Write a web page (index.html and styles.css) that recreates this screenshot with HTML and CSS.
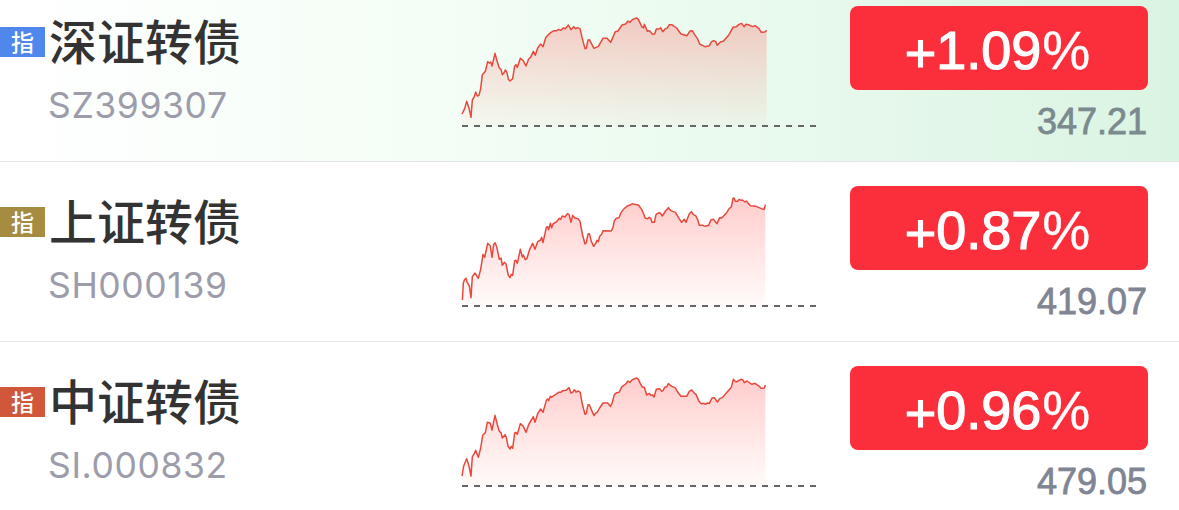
FILE: index.html
```
<!doctype html>
<html lang="zh-CN"><head>
	<title>自选</title>
	<meta charset="utf-8">
	<link rel="stylesheet" href="styles.css">
	<script src="charts.js" defer></script>
</head><body>
	<svg class="defs" width="0" height="0">
		<linearGradient id="fill" x1="0" y1="54" x2="0" y2="378" gradientUnits="userSpaceOnUse">
			<stop offset="0" stop-color="#ff3b3b" stop-opacity=".26"/>
			<stop offset="1" stop-color="#ff5b4b" stop-opacity=".03"/>
		</linearGradient>
	</svg>
	<div class="list">
		<div class="row active">
			<span class="tag blue">指</span>
			<div class="stock">
				<div class="name">深证转债</div>
				<div class="code">SZ399307</div>
			</div>
			<svg class="chart" viewBox="0 0 1098 420">
				<path class="area"/>
				<path class="line"/>
				<path class="base" d="M36 378H1098"/>
			</svg>
			<div class="quote">
				<div class="change"><span class="sign">+</span>1.09<span class="pct">%</span></div>
				<div class="price">347.21</div>
			</div>
		</div>
		<div class="row">
			<span class="tag gold">指</span>
			<div class="stock">
				<div class="name">上证转债</div>
				<div class="code">SH000139</div>
			</div>
			<svg class="chart" viewBox="0 0 1098 420">
				<path class="area"/>
				<path class="line"/>
				<path class="base" d="M36 378H1098"/>
			</svg>
			<div class="quote">
				<div class="change"><span class="sign">+</span>0.87<span class="pct">%</span></div>
				<div class="price">419.07</div>
			</div>
		</div>
		<div class="row">
			<span class="tag red">指</span>
			<div class="stock">
				<div class="name">中证转债</div>
				<div class="code">SI.000832</div>
			</div>
			<svg class="chart" viewBox="0 0 1098 420">
				<path class="area"/>
				<path class="line"/>
				<path class="base" d="M36 378H1098"/>
			</svg>
			<div class="quote">
				<div class="change"><span class="sign">+</span>0.96<span class="pct">%</span></div>
				<div class="price">479.05</div>
			</div>
		</div>
	</div>
</body></html>
```

FILE: charts.js
```
// x y pairs, one series per row
var series = [
	'36 342 44 326 50 304 58 328 63 352 67 300 73 290 77 276 82 288 87 286 92 266 97 224 106 214 113 185 118 189 122 186 126 198 135 160 142 186 148 204 153 208 157 224 161 220 166 210 171 218 175 238 180 243 188 236 194 198 198 194 202 202 211 175 219 181 228 198 236 177 242 172 250 154 256 166 263 144 272 132 279 140 287 113 295 104 302 98 312 92 320 92 326 88 332 91 340 84 346 86 355 75 363 89 371 80 377 86 382 83 390 86 397 116 405 146 409 145 414 120 418 119 424 130 432 145 445 139 459 115 471 115 482 127 496 95 504 93 516 75 527 72 534 63 540 67 547 59 560 54 565 58 571 71 577 82 581 83 583 73 588 84 592 94 598 92 608 103 614 102 619 87 629 86 632 83 638 95 646 86 651 85 658 74 665 74 680 84 693 102 711 107 720 93 727 92 734 104 742 115 749 132 757 136 765 140 778 137 784 126 791 122 797 125 802 136 812 125 820 124 837 104 849 82 859 80 867 73 875 70 882 80 888 73 895 74 908 80 915 77 927 86 934 97 944 96 950 91',
	'37 360 40 310 43 300 48 295 52 308 58 318 63 353 67 290 75 279 85 295 92 268 99 223 104 232 113 190 121 198 126 232 131 194 135 188 140 200 148 238 153 234 157 256 163 247 168 252 175 286 180 293 184 283 188 286 194 242 198 241 202 250 211 208 217 231 220 225 226 239 231 235 239 208 248 190 255 208 263 185 272 180 275 172 279 188 289 142 293 140 296 149 301 130 305 143 309 132 320 125 328 115 332 118 337 108 345 111 352 101 357 103 363 127 368 106 374 114 384 116 390 124 397 162 405 192 409 188 414 162 418 161 424 184 431 199 437 190 441 181 445 185 449 169 455 163 459 152 484 153 489 142 493 122 499 115 507 113 513 98 523 85 534 77 541 75 547 71 552 73 565 75 575 88 586 115 593 116 598 112 602 115 606 127 613 127 618 104 623 100 630 98 637 108 647 93 655 83 663 92 676 97 687 115 695 127 703 118 708 127 718 101 724 95 730 104 737 107 743 119 748 136 758 136 766 139 776 136 783 119 790 118 801 131 809 113 815 114 830 98 838 85 844 81 849 55 852 54 856 64 863 64 867 58 873 61 877 60 885 66 889 63 901 77 918 79 940 88 943 87 946 74',
	'36 348 41 318 50 296 57 318 63 348 67 290 73 281 77 271 85 292 92 264 98 226 106 218 112 187 121 190 126 210 135 166 142 194 148 214 153 218 157 234 165 224 169 233 174 258 180 267 184 259 188 265 194 219 198 217 202 223 211 191 220 199 228 217 237 192 250 170 255 187 263 161 272 147 279 157 289 121 293 117 296 122 301 109 304 112 316 104 326 97 332 97 338 92 348 91 357 83 363 99 368 97 373 89 378 96 386 93 391 98 396 129 405 163 409 160 414 134 418 134 424 149 432 167 437 159 441 158 449 144 459 129 473 129 481 139 486 130 493 104 500 98 507 97 516 80 527 72 534 63 540 67 547 59 560 54 565 58 571 71 577 81 583 82 590 105 598 100 602 106 608 105 612 111 619 88 629 86 635 94 639 92 645 81 650 81 655 71 665 79 675 83 685 99 693 109 710 109 718 94 725 90 733 100 738 103 747 124 754 131 762 130 766 133 771 129 778 130 786 114 793 113 802 126 810 115 818 112 831 97 844 82 850 58 858 66 873 58 879 60 883 68 891 63 906 73 915 70 928 79 933 85 943 84 946 75'
];

document.querySelectorAll('.chart').forEach(function(chart, i) {
	var points = series[i];
	chart.querySelector('.line').setAttribute('d', 'M' + points);
	chart.querySelector('.area').setAttribute('d', 'M' + points + 'V378H36Z');
});
```

FILE: styles.css
```
body {
	margin: 0;
	background: white;
	overflow: hidden;
	font-family: "Liberation Sans", "Noto Sans CJK SC", sans-serif;
}

.defs {
	display: block;
}

.list {
	margin-top: -18px;
}

.row {
	display: flex;
	align-items: flex-start;
	box-sizing: border-box;
	height: 180px;
	padding: 18px 31px 0 0;
	border-bottom: 1px solid #e4e4e6;
}

.active {
	background: linear-gradient(to right, #fff 0, #f4fef6 35%, #e8f9ed 68%, #daf4e2 100%);
}

.tag {
	width: 45px;
	height: 30px;
	margin: 27px 4px 0 0;
	color: white;
	font: 500 23px/28px "Noto Sans CJK SC", sans-serif;
	text-align: center;
}

.blue { background: #4f87ec; }
.gold { background: #a58c40; }
.red { background: #d0573a; }

.stock {
	width: 401px;
}

.name {
	height: 84px;
	color: #333;
	font: 500 48px/79px "Noto Sans CJK SC", sans-serif;
}

.code {
	margin-left: -1px;
	color: #9c9cab;
	font: 400 35.5px/43px Inter, sans-serif;
	letter-spacing: .6px;
}

.chart {
	width: 366px;
	height: 140px;
}

.area {
	fill: url(#fill);
}

.line {
	fill: none;
	stroke: #e8483c;
	stroke-width: 4.5;
	stroke-linejoin: round;
}

.base {
	stroke: #666;
	stroke-width: 5.5;
	stroke-dasharray: 18 18;
}

.quote {
	width: 298px;
	margin: 6px 0 0 auto;
}

.change {
	height: 84px;
	box-sizing: border-box;
	padding-right: 3px;
	border-radius: 8px;
	background: #fb2f3b;
	color: white;
	font-size: 54px;
	line-height: 89px;
	text-align: center;
	-webkit-text-stroke: 1.2px white;
}

.sign {
	display: inline-block;
	line-height: 1;
	transform: translateY(3px);
}

.pct {
	margin-left: 1px;
	-webkit-text-stroke: .3px white;
}

.price {
	padding-right: 1px;
	color: #7f8593;
	font-size: 36px;
	line-height: 63px;
	text-align: right;
	-webkit-text-stroke: .8px #7f8593;
}

.active .price {
	color: #7a8a8e;
	-webkit-text-stroke-color: #7a8a8e;
}
```
